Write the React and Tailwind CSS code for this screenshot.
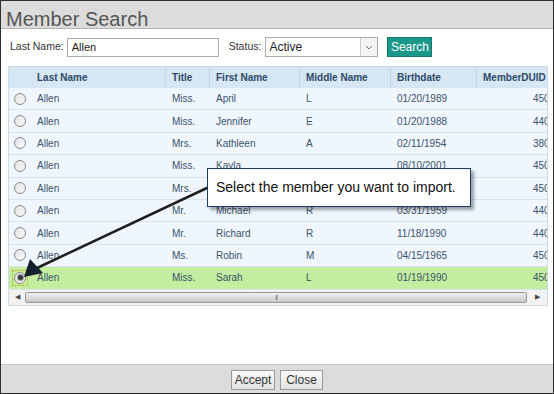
const rows = [
  { title: 'Miss.', first: 'April', middle: 'L', birth: '01/20/1989', id: '45012' },
  { title: 'Miss.', first: 'Jennifer', middle: 'E', birth: '01/20/1988', id: '44012' },
  { title: 'Mrs.', first: 'Kathleen', middle: 'A', birth: '02/11/1954', id: '38012' },
  { title: 'Miss.', first: 'Kayla', middle: '', birth: '08/10/2001', id: '45012' },
  { title: 'Mrs.', first: 'Karen', middle: 'J', birth: '06/02/1972', id: '45012' },
  { title: 'Mr.', first: 'Michael', middle: 'R', birth: '03/31/1959', id: '44012' },
  { title: 'Mr.', first: 'Richard', middle: 'R', birth: '11/18/1990', id: '44012' },
  { title: 'Ms.', first: 'Robin', middle: 'M', birth: '04/15/1965', id: '45012' },
  { title: 'Miss.', first: 'Sarah', middle: 'L', birth: '01/19/1990', id: '45012', selected: true },
]

function Radio({ checked }) {
  return (
    <div className={checked ? 'p-[1px] outline outline-1 outline-dotted outline-[#c9a400]' : ''}>
      <div className="w-[12px] h-[12px] rounded-full border border-[#8a8a8a] bg-gradient-to-br from-[#e4e4e4] to-[#fafafa] flex items-center justify-center">
        {checked && <div className="w-[5px] h-[5px] rounded-full bg-[#3a3a3a] ring-1 ring-[#9a9a9a]" />}
      </div>
    </div>
  )
}

function Cols({ cells, className }) {
  return (
    <div className={`flex items-center ${className}`}>
      <div className="w-[22px] shrink-0 flex justify-center">{cells[0]}</div>
      <div className="w-[135px] shrink-0 pl-[6px] h-full flex items-center">{cells[1]}</div>
      <div className="w-[44px] shrink-0 pl-[6px] h-full flex items-center">{cells[2]}</div>
      <div className="w-[90px] shrink-0 pl-[6px] h-full flex items-center">{cells[3]}</div>
      <div className="w-[91px] shrink-0 pl-[6px] h-full flex items-center">{cells[4]}</div>
      <div className="w-[86px] shrink-0 pl-[6px] h-full flex items-center">{cells[5]}</div>
      <div className="w-[109px] shrink-0 px-[6px] h-full flex items-center">{cells[6]}</div>
    </div>
  )
}

export default function App() {
  return (
    <div className="relative w-[554px] h-[394px] bg-white border border-[#2e2e2e] flex flex-col overflow-hidden font-['Liberation_Sans',Arial,sans-serif]">
      <div className="h-[28px] shrink-0 bg-[#dcdcdc] border-b border-[#b4b4b4] flex items-end pl-[5px] pb-[1px]">
        <h1 className="text-[20px] leading-[16px] text-[#555]">Member Search</h1>
      </div>

      <div className="flex items-center h-[20px] mt-[8px] pl-[9px] text-[10.5px] text-[#333]">
        <span>Last Name:</span>
        <div className="ml-[3px] w-[152px] h-[19px] border border-[#aaa] flex items-center pl-[4px] text-[11px] text-[#222]">Allen</div>
        <span className="ml-[10px]">Status:</span>
        <div className="ml-[4px] w-[113px] h-[20px] border border-[#aaa] flex items-center text-[#222]">
          <span className="flex-1 pl-[3px] text-[12px]">Active</span>
          <div className="w-[17px] h-full border-l border-[#ccc] bg-[#f4f4f4] flex items-center justify-center">
            <svg width="8" height="5" viewBox="0 0 8 5"><path d="M1 1 L4 4 L7 1" fill="none" stroke="#777" strokeWidth="1" /></svg>
          </div>
        </div>
        <div className="ml-[9px] h-[20px] w-[45px] bg-[#1a998a] border border-[#15796d] text-white text-[12px] flex items-center justify-center">Search</div>
      </div>

      <div className="mt-[9px] mx-[7px] w-[540px] border border-[#cdd9e5] text-[10px] text-[#3b526b]">
        <div className="overflow-hidden">
          <Cols
            className="h-[21px] bg-[#d6e6f3] font-bold text-[#2c4a69] [&>div]:border-r [&>div]:border-[#c2d6e8]"
            cells={['', 'Last Name', 'Title', 'First Name', 'Middle Name', 'Birthdate', 'MemberDUID']}
          />
          {rows.map((r, i) => (
            <Cols
              key={i}
              className={`h-[22.4px] border-b border-[#d7e5f1] ${r.selected ? 'bg-[#c3ee9f]' : 'bg-[#eff6fd]'}`}
              cells={[
                <Radio checked={r.selected} />,
                'Allen',
                r.title,
                r.first,
                r.middle,
                r.birth,
                <span className="ml-[50px]">{r.id}</span>,
              ]}
            />
          ))}
        </div>
        <div className="h-[15px] bg-[#f2f2f2] flex items-center px-[2px]">
          <span className="w-[12px] text-[7px] text-[#444] text-center">◀</span>
          <div className="flex-1 h-[11px] mx-[2px] rounded-[2px] border border-[#999] bg-gradient-to-b from-[#f0f0f0] to-[#c8c8c8] flex items-center justify-center">
            <span className="text-[6px] text-[#666] tracking-[-1px]">|||</span>
          </div>
          <span className="w-[16px] text-[7px] text-[#444] text-center">▶</span>
        </div>
      </div>

      <div className="mt-auto h-[29px] bg-[#dcdcdc] border-t border-[#c8c8c8] flex items-start justify-center gap-[5px] pt-[5px]">
        <div className="h-[20px] w-[44px] border border-[#9a9a9a] bg-gradient-to-b from-[#fafafa] to-[#e2e2e2] text-[12px] text-[#333] flex items-center justify-center">Accept</div>
        <div className="h-[20px] w-[43px] border border-[#9a9a9a] bg-gradient-to-b from-[#fafafa] to-[#e2e2e2] text-[12px] text-[#333] flex items-center justify-center">Close</div>
      </div>

      <svg className="absolute left-0 top-0 pointer-events-none" width="554" height="394">
        <line x1="208" y1="186" x2="36" y2="267" stroke="#1f1f1f" strokeWidth="2.5" />
        <polygon points="23,276 29,258 42,272" fill="#15202e" />
      </svg>

      <div className="absolute left-[206px] top-[167px] w-[264px] h-[39px] bg-white border-[1.5px] border-[#1f3a66] shadow-[3px_3px_3px_rgba(0,0,0,0.35)] flex items-center pl-[8px] text-[14px] text-[#111]">
        Select the member you want to import.
      </div>
    </div>
  )
}
